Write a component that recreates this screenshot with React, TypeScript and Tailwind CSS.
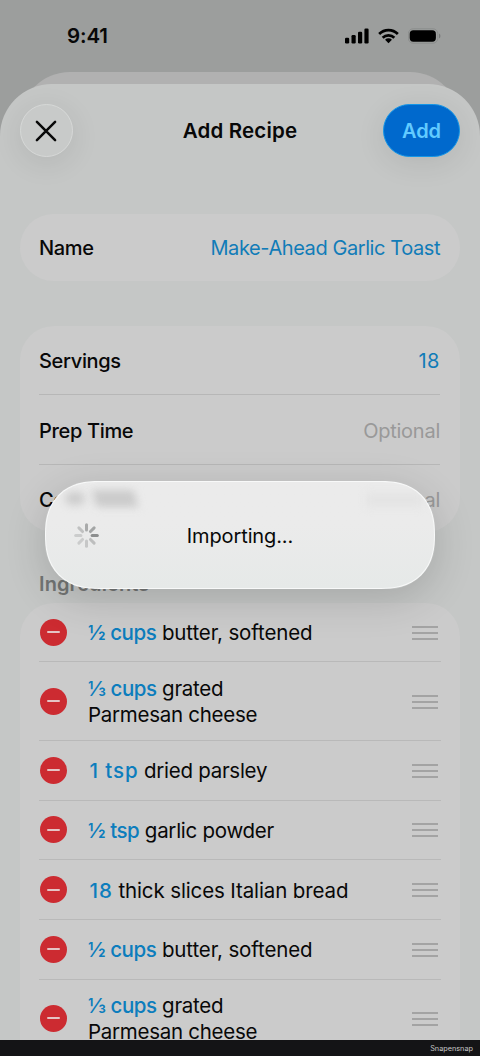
interface Ingredient {
  amount: string
  name: string
  tall?: boolean
  wide?: boolean
}

const ingredients: Ingredient[] = [
  { amount: '½ cups', name: 'butter, softened', wide: true },
  { amount: '⅓ cups', name: 'grated Parmesan cheese', tall: true },
  { amount: '1 tsp', name: 'dried parsley' },
  { amount: '½ tsp', name: 'garlic powder' },
  { amount: '18', name: 'thick slices Italian bread', wide: true },
  { amount: '½ cups', name: 'butter, softened', wide: true },
  { amount: '⅓ cups', name: 'grated Parmesan cheese', tall: true },
]

const spokes = ['#8c8e8e', '#a3a5a5', '#a9aaaa', '#c0c1c1', '#cbcccc', '#cbcccc', '#c6c7c7', '#bdbebe']

const StatusBar = () => {
  return (
    <div className="flex h-[72px] items-center justify-between pl-[67px] pr-[39.5px]">
      <span className="pt-px text-[20.5px] font-semibold tracking-[-0.1px]">9:41</span>
      <div className="flex items-center gap-[9px]">
        <svg width="24" height="16" viewBox="0 0 24 16">
          <rect x="0" y="9.8" width="4.2" height="5.6" rx="1.2" />
          <rect x="6.5" y="7" width="4.2" height="8.4" rx="1.2" />
          <rect x="13" y="3.8" width="4.2" height="11.6" rx="1.2" />
          <rect x="19.4" y="0.6" width="4.2" height="14.8" rx="1.2" />
        </svg>
        <svg width="21" height="16" viewBox="0 0 22 16">
          <g fill="none" stroke="#000" strokeWidth="2.8">
            <path d="M1.2 5.9a13.8 13.8 0 0 1 19.6 0" />
            <path d="M4.9 9.8a8.6 8.6 0 0 1 12.2 0" />
          </g>
          <path d="M11 15.7 7.4 12a5 5 0 0 1 7.2 0Z" />
        </svg>
        <svg width="33" height="16" viewBox="0 0 33 16">
          <rect x="0.4" y="0.8" width="29.4" height="14.4" rx="4.8" fill="none" stroke="#8b8d8c" strokeWidth="1" />
          <rect x="1.7" y="2.3" width="26.2" height="11.4" rx="3.6" />
          <path d="M31 5.5v5c1-.4 1.4-1.4 1.4-2.5s-.4-2.1-1.4-2.5Z" fill="#777978" />
        </svg>
      </div>
    </div>
  )
}

const Field = ({ label, value, valueClass }: { label: string, value: string, valueClass: string }) => {
  return (
    <div className="flex flex-1 items-center justify-between">
      <span className="font-medium tracking-[-0.33px]">{label}</span>
      <span className={valueClass}>{value}</span>
    </div>
  )
}

const IngredientRow = ({ item }: { item: Ingredient }) => {
  const startsWithOne = item.amount.startsWith('1')

  return (
    <div className={`flex shrink-0 items-center border-b border-[#b9b9b9] ${item.tall ? 'h-[78.4px]' : 'h-[59.7px]'}`}>
      <div className="ml-px flex size-[27px] shrink-0 items-center justify-center rounded-full bg-[#cc2b31]">
        <div className="h-[2px] w-[13px] rounded-full bg-[#e5c4c5]" />
      </div>
      <p className={`ml-[21px] w-[290px] pt-[2px] text-[20.5px] leading-[26px] ${item.wide ? 'tracking-[-0.12px]' : 'tracking-[-0.27px]'}`}>
        <span className={`font-medium text-[#0c7dbd] ${startsWithOne ? 'pl-[1.5px] tracking-[0.9px]' : 'tracking-[-0.45px]'}`}>{item.amount}</span>
        {' '}
        {item.tall ? <>grated<br />Parmesan cheese</> : item.name}
      </p>
      <div className="ml-auto mr-[3px] flex w-[26px] flex-col gap-[4px] pt-px">
        <div className="h-[2px] bg-[#a3a3a3]" />
        <div className="h-[2px] bg-[#a3a3a3]" />
        <div className="h-[2px] bg-[#a3a3a3]" />
      </div>
    </div>
  )
}

const ImportingDialog = () => {
  return (
    <div className="absolute left-[45px] top-[481px] flex h-[108px] w-[390px] items-center justify-center overflow-hidden rounded-[54px] border-[1.5px] border-[#f8f9f9] bg-linear-to-b from-[#ebebeb] from-40% to-[#e6e9e8] [corner-shape:superellipse(1.25)]">
      {/* rows behind the glass */}
      <div className="absolute left-[19px] top-[10px] h-[13px] w-[20px] rounded-full bg-[#cbcbcb] blur-[4px]" />
      <div className="absolute left-[48px] top-[8px] h-[17px] w-[42px] skew-x-12 bg-[#cbcbcb] blur-[4px]" />
      <div className="absolute left-[320px] top-[11px] h-[14px] w-[56px] bg-[#e4e4e4] blur-[4px]" />
      <svg className="absolute left-[28px] top-[41px]" width="25" height="25" viewBox="-12.5 -12.5 25 25">
        {spokes.map((color, i) => (
          <line key={i} x1="5.6" y1="0" x2="10.8" y2="0" stroke={color} strokeWidth="3" strokeLinecap="round" transform={`rotate(${-i * 45})`} />
        ))}
      </svg>
      <span className="pt-px tracking-[-0.12px]">Importing...</span>
    </div>
  )
}

export default function App() {
  return (
    <div className="relative flex h-[1056px] w-[480px] flex-col overflow-hidden bg-[#9c9e9d] font-['Inter','Liberation_Sans',sans-serif] text-[20px] text-[#080808]">
      <StatusBar />
      <div className="mx-5 h-16 shrink-0 rounded-t-[50px] bg-[#b1b1b1]" />

      <main className="relative -mt-[52px] flex min-h-0 flex-1 flex-col overflow-hidden rounded-t-[52px] bg-[#c5c7c6] px-5">
        <header className="mt-5 flex h-[53px] shrink-0 items-center justify-between">
          <button className="flex size-[53px] items-center justify-center rounded-full border border-[#d6d8d7] bg-[#c8cac9] pr-px shadow-[0_6px_30px_rgba(0,0,0,0.09)]">
            <svg width="22" height="22" viewBox="0 0 22 22" fill="none" stroke="#090909" strokeWidth="2.5" strokeLinecap="round">
              <path d="M1.9 1.9 20.1 20.1M20.1 1.9 1.9 20.1" />
            </svg>
          </button>
          <h1 className="ml-6 pt-[2px] text-[20.5px] font-semibold tracking-[0.15px]">Add Recipe</h1>
          <button className="h-[53px] w-[77px] rounded-full border border-[#1596e6] bg-[#0069cd] font-semibold text-[#62cbff] shadow-[0_6px_30px_rgba(0,0,0,0.09)]">Add</button>
        </header>

        <section className="mt-[57px] flex h-[67px] shrink-0 rounded-[34px] bg-[#cbcbcb] pl-[19px] pr-5">
          <Field label="Name" value="Make-Ahead Garlic Toast" valueClass="tracking-[-0.42px] text-[#117cb8]" />
        </section>

        <section className="mt-[45px] flex h-[206px] shrink-0 flex-col rounded-[34px] bg-[#cbcbcb] pl-[19px] pr-5">
          <div className="flex h-[69px] shrink-0 border-b border-[#b7b7b7] pt-[2px]">
            <Field label="Servings" value="18" valueClass="tracking-[0.5px] text-[#117cb8]" />
          </div>
          <div className="flex h-[70px] shrink-0 border-b border-[#b7b7b7] pt-[2px]">
            <Field label="Prep Time" value="Optional" valueClass="tracking-[-0.25px] text-[#999999]" />
          </div>
          <div className="flex h-[69px] shrink-0 pt-px">
            <Field label="Cook Time" value="Optional" valueClass="tracking-[-0.25px] text-[#999999]" />
          </div>
        </section>

        <h2 className="ml-[19px] mt-[39px] h-[26px] shrink-0 font-semibold leading-[26px] tracking-[0.1px] text-[#737574]">Ingredients</h2>

        <section className="mt-[5.8px] flex h-[520px] shrink-0 flex-col rounded-t-[34px] bg-[#cbcbcb] px-[19px]">
          {ingredients.map((item, i) => <IngredientRow key={i} item={item} />)}
        </section>
      </main>

      <div className="pointer-events-none absolute left-[45px] top-[481px] h-[108px] w-[390px] rounded-[46px] shadow-[0_10px_42px_rgba(0,0,0,0.16)]" />
      <ImportingDialog />

      <footer className="z-10 flex h-4 shrink-0 items-center justify-end bg-[#141416] pr-[7px] pt-[3px] text-[7.3px] text-[#c9c9c9]">
        Snapensnap
      </footer>
    </div>
  )
}
